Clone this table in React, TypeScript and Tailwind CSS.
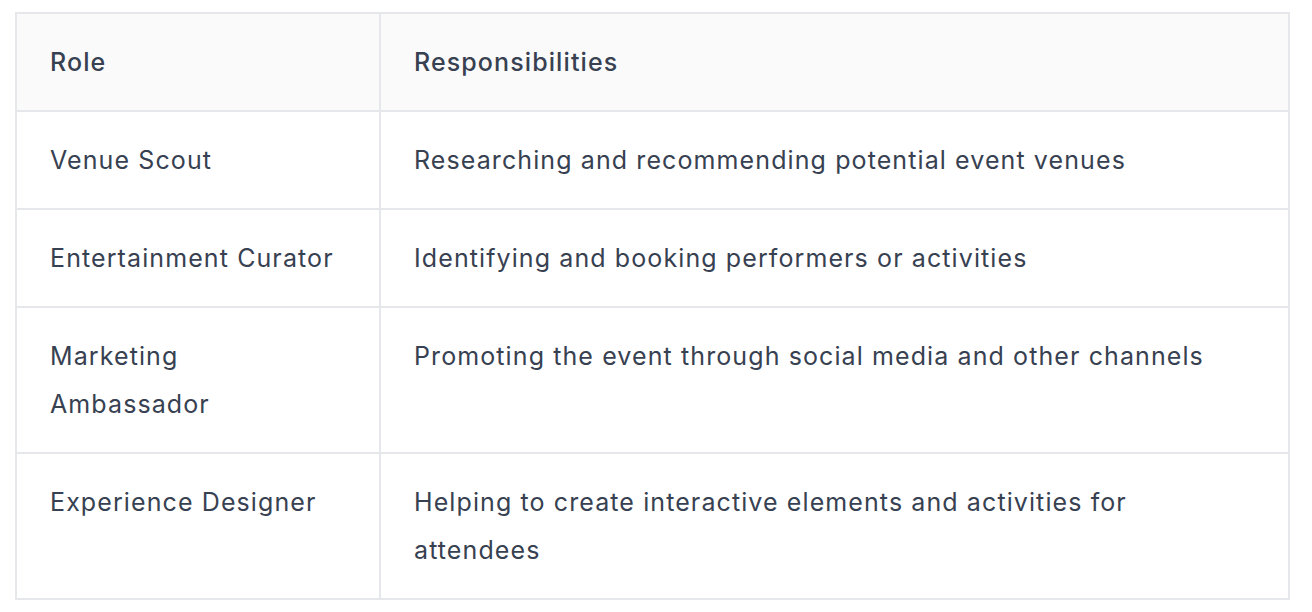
import React from "react";

const rows = [
  { role: "Venue Scout", text: "Researching and recommending potential event venues" },
  { role: "Entertainment Curator", text: "Identifying and booking performers or activities" },
  { role: "Marketing Ambassador", text: "Promoting the event through social media and other channels" },
  {
    role: "Experience Designer",
    text: "Helping to create interactive elements and activities for attendees",
  },
];

export default function App() {
  return (
    <div className="w-[1312px] h-[612px] bg-white pl-[15px] pt-[12px] font-['Inter',sans-serif] text-[#374151]">
      <table className="w-[1275px] border-collapse border-2 border-[#e5e7eb] table-fixed text-[25px] leading-[48px] tracking-[1.1px]">
        <colgroup>
          <col className="w-[364px]" />
          <col />
        </colgroup>
        <thead>
          <tr className="bg-[#fafafa]">
            <th className="border-2 border-[#e5e7eb] px-[33px] py-[24px] text-left font-medium">Role</th>
            <th className="border-2 border-[#e5e7eb] px-[33px] py-[24px] text-left font-medium">Responsibilities</th>
          </tr>
        </thead>
        <tbody>
          {rows.map((r) => (
            <tr key={r.role}>
              <td className="border-2 border-[#e5e7eb] px-[33px] py-[24px] align-top">{r.role}</td>
              <td className="border-2 border-[#e5e7eb] px-[33px] py-[24px] align-top">{r.text}</td>
            </tr>
          ))}
        </tbody>
      </table>
    </div>
  );
}
